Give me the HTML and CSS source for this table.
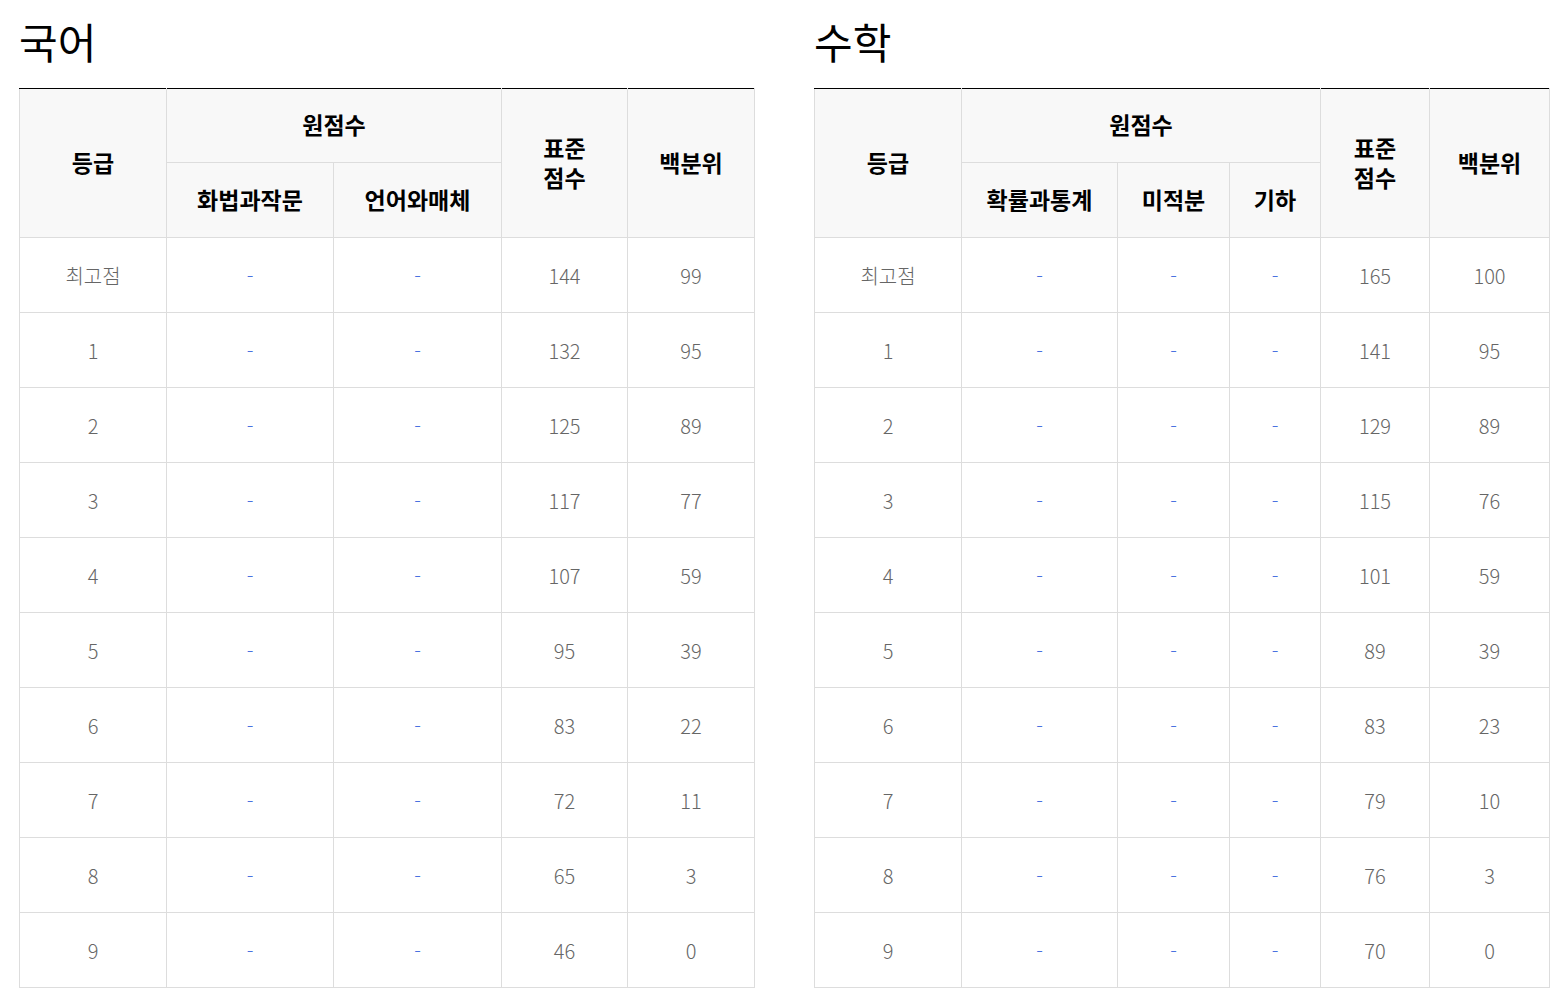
FILE: index.html
```html
<!DOCTYPE html>
<html lang="ko">
<head>
<meta charset="utf-8">
<title>등급컷</title>
<link rel="stylesheet" href="styles.css">
</head>
<body>
<div class="page">
  <section class="panel">
    <h2 class="title">국어</h2>
    <table class="grade">
      <colgroup>
        <col class="c147"><col class="c167"><col class="c168"><col class="c126"><col class="c127">
      </colgroup>
      <thead>
        <tr>
          <th rowspan="2">등급</th>
          <th colspan="2">원점수</th>
          <th rowspan="2">표준<br>점수</th>
          <th rowspan="2">백분위</th>
        </tr>
        <tr>
          <th>화법과작문</th>
          <th>언어와매체</th>
        </tr>
      </thead>
      <tbody>
        <tr><td>최고점</td><td class="dash">-</td><td class="dash">-</td><td>144</td><td>99</td></tr>
        <tr><td>1</td><td class="dash">-</td><td class="dash">-</td><td>132</td><td>95</td></tr>
        <tr><td>2</td><td class="dash">-</td><td class="dash">-</td><td>125</td><td>89</td></tr>
        <tr><td>3</td><td class="dash">-</td><td class="dash">-</td><td>117</td><td>77</td></tr>
        <tr><td>4</td><td class="dash">-</td><td class="dash">-</td><td>107</td><td>59</td></tr>
        <tr><td>5</td><td class="dash">-</td><td class="dash">-</td><td>95</td><td>39</td></tr>
        <tr><td>6</td><td class="dash">-</td><td class="dash">-</td><td>83</td><td>22</td></tr>
        <tr><td>7</td><td class="dash">-</td><td class="dash">-</td><td>72</td><td>11</td></tr>
        <tr><td>8</td><td class="dash">-</td><td class="dash">-</td><td>65</td><td>3</td></tr>
        <tr><td>9</td><td class="dash">-</td><td class="dash">-</td><td>46</td><td>0</td></tr>
      </tbody>
    </table>
  </section>
  <section class="panel">
    <h2 class="title">수학</h2>
    <table class="grade">
      <colgroup>
        <col class="c147"><col class="c156"><col class="c112"><col class="c91"><col class="c109"><col class="c120">
      </colgroup>
      <thead>
        <tr>
          <th rowspan="2">등급</th>
          <th colspan="3">원점수</th>
          <th rowspan="2">표준<br>점수</th>
          <th rowspan="2">백분위</th>
        </tr>
        <tr>
          <th>확률과통계</th>
          <th>미적분</th>
          <th>기하</th>
        </tr>
      </thead>
      <tbody>
        <tr><td>최고점</td><td class="dash">-</td><td class="dash">-</td><td class="dash">-</td><td>165</td><td>100</td></tr>
        <tr><td>1</td><td class="dash">-</td><td class="dash">-</td><td class="dash">-</td><td>141</td><td>95</td></tr>
        <tr><td>2</td><td class="dash">-</td><td class="dash">-</td><td class="dash">-</td><td>129</td><td>89</td></tr>
        <tr><td>3</td><td class="dash">-</td><td class="dash">-</td><td class="dash">-</td><td>115</td><td>76</td></tr>
        <tr><td>4</td><td class="dash">-</td><td class="dash">-</td><td class="dash">-</td><td>101</td><td>59</td></tr>
        <tr><td>5</td><td class="dash">-</td><td class="dash">-</td><td class="dash">-</td><td>89</td><td>39</td></tr>
        <tr><td>6</td><td class="dash">-</td><td class="dash">-</td><td class="dash">-</td><td>83</td><td>23</td></tr>
        <tr><td>7</td><td class="dash">-</td><td class="dash">-</td><td class="dash">-</td><td>79</td><td>10</td></tr>
        <tr><td>8</td><td class="dash">-</td><td class="dash">-</td><td class="dash">-</td><td>76</td><td>3</td></tr>
        <tr><td>9</td><td class="dash">-</td><td class="dash">-</td><td class="dash">-</td><td>70</td><td>0</td></tr>
      </tbody>
    </table>
  </section>
</div>
</body>
</html>
```

FILE: styles.css
```css
html, body {
  margin: 0;
  padding: 0;
  background: #fff;
}

body {
  font-family: "Noto Sans CJK KR", "Noto Sans", sans-serif;
  color: #000;
}

.page {
  display: flex;
  gap: 60px;
  padding: 11px 0 0 19px;
}

.panel {
  width: 735px;
}

.title {
  margin: 0 0 17px 0;
  font-size: 42px;
  font-weight: 400;
  line-height: 60px;
  height: 60px;
}

.grade {
  width: 735px;
  border-collapse: collapse;
  table-layout: fixed;
}

.c147 { width: 147px; }
.c167 { width: 167px; }
.c168 { width: 168px; }
.c126 { width: 126px; }
.c127 { width: 127px; }
.c156 { width: 156px; }
.c112 { width: 112px; }
.c91 { width: 91px; }
.c109 { width: 109px; }
.c120 { width: 120px; }

.grade th,
.grade td {
  border: 1px solid #dddddd;
  text-align: center;
  vertical-align: middle;
  padding: 0;
}

.grade th {
  background: #f8f8f8;
  font-size: 23px;
  font-weight: 700;
  line-height: 30px;
  color: #000;
  height: 70px;
  padding-bottom: 3px;
}

.grade thead tr:first-child th {
  border-top: 1px solid #000;
}

.grade thead tr:nth-child(2) th {
  height: 71px;
}

.grade td {
  height: 72px;
  padding-top: 2px;
  font-size: 20px;
  font-weight: 300;
  color: #666666;
  line-height: 28px;
}

.grade td.dash {
  color: #4a72e0;
}
```
